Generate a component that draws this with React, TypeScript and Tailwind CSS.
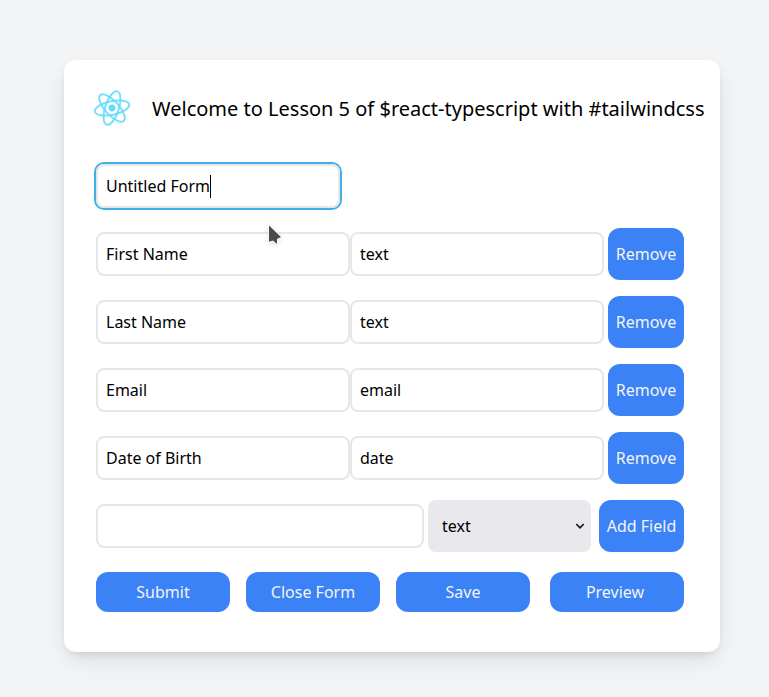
const fields = [
  { id: 1, label: "First Name", type: "text" },
  { id: 2, label: "Last Name", type: "text" },
  { id: 3, label: "Email", type: "email" },
  { id: 4, label: "Date of Birth", type: "date" },
];

const inputClass =
  "h-11 min-w-0 rounded-lg border-2 border-[#e5e7eb] bg-white p-2 text-black outline-none";
const buttonClass = "shrink-0 rounded-xl bg-[#3b82f6] text-[#f3f4f6]";

function ReactLogo() {
  return (
    <svg width="48" height="48" viewBox="-24 -24 48 48" fill="none" className="shrink-0">
      <circle r="3.4" fill="#61dafb" />
      <g stroke="#61dafb" strokeOpacity="0.85" strokeWidth="2">
        <ellipse rx="17.5" ry="6.8" transform="rotate(-12)" />
        <ellipse rx="17.5" ry="6.8" transform="rotate(48)" />
        <ellipse rx="17.5" ry="6.8" transform="rotate(108)" />
      </g>
    </svg>
  );
}

function Pointer() {
  return (
    <svg
      width="20"
      height="26"
      viewBox="0 0 20 26"
      className="pointer-events-none absolute left-[201px] top-[162px] drop-shadow-sm"
    >
      <path
        d="M4 3.5v16.3l4-1.3 4 3.4v-4.9l4-1.9z"
        fill="#4a4a4a"
        stroke="white"
        strokeWidth="1.6"
        paintOrder="stroke"
      />
    </svg>
  );
}

export default function App() {
  return (
    <div className="flex h-[697px] items-start bg-[#f3f4f6] pl-16 pt-[60px] font-['Noto_Sans',sans-serif] text-base text-black">
      <main className="relative h-[592px] w-[656px] rounded-xl bg-white pl-8 pr-9 pt-6 shadow-[0_10px_25px_-3px_rgb(0_0_0/0.1),0_4px_10px_-4px_rgb(0_0_0/0.15)]">
        <header className="-ml-2 flex h-12 items-center gap-4">
          <ReactLogo />
          <h1 className="whitespace-nowrap pt-0.5 text-xl">
            Welcome to Lesson 5 of $react-typescript with #tailwindcss
          </h1>
        </header>

        <div className="mt-8 flex h-11 w-[244px] items-center rounded-lg border-2 border-[#e5e7eb] p-2 ring-2 ring-[#43ade8]">
          <span>Untitled Form</span>
          <span className="h-[23px] w-px bg-black" />
        </div>

        <div className="mt-5 flex flex-col gap-4">
          {fields.map((field) => (
            <div key={field.id} className="flex h-[52px] items-center">
              <input className={`${inputClass} flex-1`} defaultValue={field.label} />
              <input className={`${inputClass} flex-1`} defaultValue={field.type} />
              <button className={`${buttonClass} ml-1 h-[52px] w-[76px]`}>Remove</button>
            </div>
          ))}
          <div className="flex h-[52px] items-center">
            <input className={`${inputClass} flex-1`} />
            <button className="ml-1 flex h-[52px] w-[163px] items-center justify-between rounded-lg bg-[#e9e9ed] pl-3.5 pr-1.5">
              <span>text</span>
              <svg width="10" height="8" viewBox="0 0 10 8" fill="none" className="shrink-0">
                <path d="m1.3 2 3.7 3.8L8.7 2" stroke="#151515" strokeWidth="1.7" />
              </svg>
            </button>
            <button className={`${buttonClass} ml-2 h-[52px] w-[85px]`}>Add Field</button>
          </div>
        </div>

        <div className="mt-5 flex justify-between">
          <div className="flex gap-4">
            <button className={`${buttonClass} h-10 w-[134px]`}>Submit</button>
            <button className={`${buttonClass} h-10 w-[134px]`}>Close Form</button>
            <button className={`${buttonClass} h-10 w-[134px]`}>Save</button>
          </div>
          <button className={`${buttonClass} h-10 w-[134px] pr-1`}>Preview</button>
        </div>

        <Pointer />
      </main>
    </div>
  );
}
